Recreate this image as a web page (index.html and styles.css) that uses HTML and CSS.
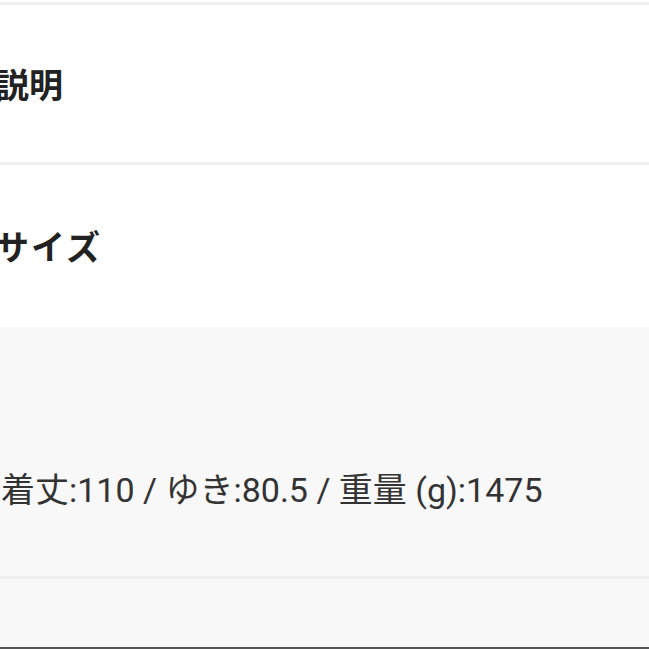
FILE: index.html
```html
<!DOCTYPE html>
<html lang="ja">
<head>
    <meta charset="UTF-8">
    <title>商品説明</title>
    <link rel="stylesheet" href="styles.css">
</head>
<body>
<div class="page">
    <div class="heading-row first">
        <h2 class="heading">説明</h2>
    </div>
    <div class="heading-row">
        <h2 class="heading wide">サイズ</h2>
    </div>
    <div class="size-panel">
        <p class="size-text">着丈:110 / ゆき:80.5 / 重量 (g):1475</p>
    </div>
    <div class="size-foot"></div>
</div>
</body>
</html>
```

FILE: styles.css
```css
body {
    margin: 0;
    background: #ffffff;
    font-family: "Noto Sans CJK JP", "Noto Sans", sans-serif;
    color: #222222;
}

.page {
    width: 649px;
    height: 649px;
    overflow: hidden;
    padding-top: 2px;
    box-sizing: border-box;
}

.heading-row {
    display: flex;
    align-items: center;
    height: 162px;
    box-sizing: border-box;
}

.heading-row.first {
    height: 163px;
    border-top: 3px solid #efefef;
    border-bottom: 3px solid #efefef;
}

.heading {
    margin: 0 0 0 -5px;
    font-size: 34px;
    font-weight: 700;
    line-height: 1;
    color: #222222;
}

.heading.wide {
    letter-spacing: 2px;
}

.size-panel {
    display: flex;
    align-items: center;
    height: 252px;
    padding-top: 76px;
    box-sizing: border-box;
    background: #f8f8f8;
    border-bottom: 3px solid #efefef;
}

.size-text {
    margin: 0 0 0 1px;
    font-family: Roboto, "Noto Sans CJK JP", sans-serif;
    font-size: 34px;
    line-height: 1;
    color: #333333;
}

.size-foot {
    height: 70px;
    box-sizing: border-box;
    background: #f8f8f8;
    border-bottom: 2px solid #555555;
}
```
